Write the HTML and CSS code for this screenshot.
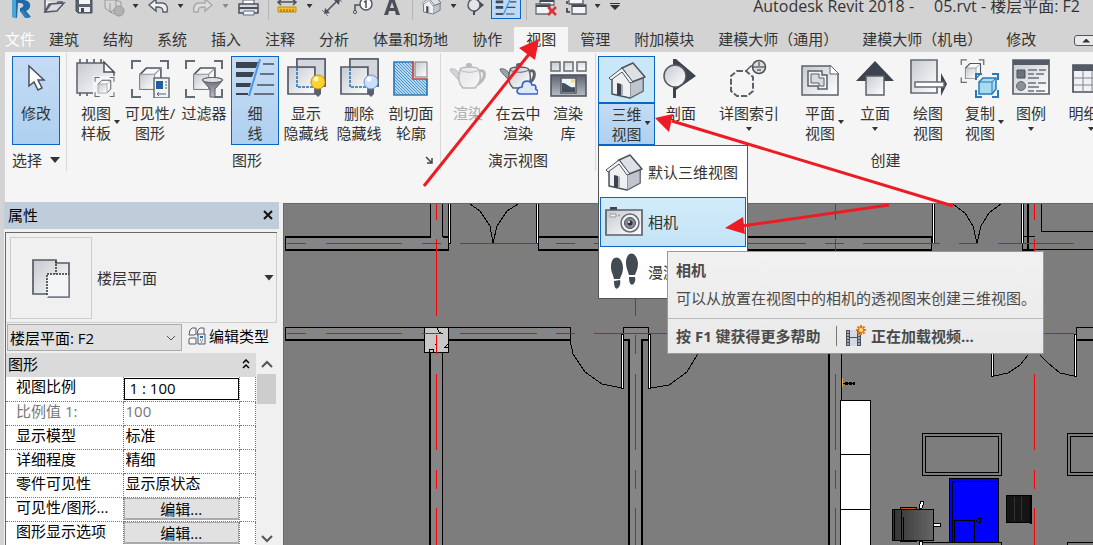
FILE: index.html
```html
<!DOCTYPE html>
<html lang="zh-CN">
<head>
  <meta charset="UTF-8">
  <title>Autodesk Revit 2018</title>
  <link rel="stylesheet" href="styles.css">
</head>
<body>

<svg class="defs" aria-hidden="true">
  <defs>
    <linearGradient id="metal" x1="0" y1="0" x2="1" y2="1">
      <stop offset="0" stop-color="#c6c9cf"/><stop offset="1" stop-color="#ffffff"/>
    </linearGradient>
    <linearGradient id="dark" x1="0" y1="0" x2="0" y2="1">
      <stop offset="0" stop-color="#5d636e"/><stop offset="1" stop-color="#b9bdc5"/>
    </linearGradient>
    <linearGradient id="seat" x1="0" y1="0" x2="1" y2="0">
      <stop offset="0" stop-color="#333"/><stop offset="1" stop-color="#666"/>
    </linearGradient>
    <pattern id="hatch" width="3" height="3" patternUnits="userSpaceOnUse">
      <rect width="3" height="3" fill="#b5d8ef"/><path d="M-1 -1l5 5" stroke="#4a95cc" stroke-width="1"/>
    </pattern>
    <symbol id="house" viewBox="0 0 40 40">
      <path d="M5 19v15l18 4 13-7V18L24 14 15 8z" fill="#d9dce1" stroke="#4d535d" stroke-width="1.5" stroke-linejoin="round"/>
      <path d="M23 38V21l13-4v14z" fill="#c0c4cc" stroke="#6a707a"/>
      <path d="M6 18l9-9 8 12v16L6 33z" fill="#eef0f2"/>
      <path d="M15 8l11-5 12 14-13 5z" fill="#dde0e5" stroke="#4d535d" stroke-width="1.5" stroke-linejoin="round"/>
      <path d="M15 8L2 18l2 2 11-8 8 11 3-1z" fill="#f4f5f6" stroke="#4d535d" stroke-linejoin="round"/>
      <path d="M10 23l4 1v12l-4-1z" fill="#3d434e"/><path d="M14 24l2 1v11l-2-1z" fill="#a7acb5"/>
    </symbol>
    <symbol id="corners" viewBox="0 0 40 40">
      <path d="M2 11V3h9M30 3h8v8M2 31v8h9M30 39h8v-8" fill="none" stroke="#666c76" stroke-width="2"/>
    </symbol>
    <symbol id="cube" viewBox="0 0 24 24">
      <path d="M2 8l6-6h14v14l-6 6H2z" fill="#f7f8f9" stroke="#50565f" stroke-width="1.5"/>
      <path d="M2 8h14v14H2z" fill="url(#metal)"/>
      <path d="M16 22V8l6-6M16 8H3" fill="none" stroke="#8b9098"/>
    </symbol>
    <symbol id="teapot" viewBox="0 0 40 40">
      <path d="M30 14c8-5 9 6 0 12" fill="none" stroke="#5b616b" stroke-width="3"/>
      <path d="M12 16C6 9 4 11 2 11c1 5 7 7 11 15z" fill="#9da1a8" stroke="#5b616b"/>
      <path d="M12 12c0-4 18-4 19 0 3 9 1 13-4 18H15c-4-4-6-9-3-18z" fill="url(#metal)" stroke="#5b616b" stroke-width="1.5"/>
      <path d="M12 12c6 3 13 3 19 0" fill="none" stroke="#5b616b"/><ellipse cx="21" cy="7" rx="3" ry="2" fill="#5b616b"/>
    </symbol>
    <symbol id="overlap" viewBox="0 0 40 40">
      <path d="M11 1h28v27H11z" fill="url(#metal)" stroke="#555b66" stroke-width="1.7"/>
      <path d="M2 9h27v27H2z" fill="url(#metal)" stroke="#555b66" stroke-width="1.7"/>
      <path d="M11 1h28v27H29V9H11z" fill="#d3d6dc" stroke="#555b66" stroke-width="1.5"/>
      <path d="M11 10v19h17" fill="none" stroke="#1d6fb8" stroke-width="1.5" stroke-dasharray="3 1"/>
    </symbol>
  </defs>
</svg>

<header class="titlebar">
  <div class="quick">
    <button class="q" aria-label="Revit"><svg viewBox="0 0 30 28"><path d="M7 0h11c9 0 9 9 3 11l5 6h-6l-5-6v-3c4 0 5-5 0-5h-2l-1 15-5-1z" fill="#1c6aa8"/><path d="M7 0h4v18l-4-1z" fill="#49a6d5"/><path d="M15 11l3-1 7 8h-5z" fill="#2c7fba"/></svg></button>
    <span class="space"></span>
    <button class="q" aria-label="打开"><svg viewBox="0 0 30 28"><path d="M7 0v12l4-8h8l1-2h4v4" fill="#eef0f2" stroke="#555b66" stroke-width="1.5"/><path d="M7 12l6-8 13-1-7 8z" fill="#d9dce0" stroke="#555b66" stroke-width="1.5"/></svg></button>
    <button class="q" aria-label="保存"><svg viewBox="0 0 30 28"><path d="M8 0v11l2 2h14V0z" fill="#596270" stroke="#4b515c"/><path d="M11 0h11v4H11z" fill="#f6f6f6"/><path d="M11 7h11v5H11z" fill="#eceef1"/><path d="M13 8h3v4h-3z" fill="#444b57"/></svg></button>
    <button class="q" aria-label="同步"><svg viewBox="0 0 30 28"><path d="M7 0v8l5 4 6-3V0zM12 3v9M18 0l5 2v8l-6 4-5-2" fill="#d6d6d6" stroke="#999"/><circle cx="21" cy="11" r="5" fill="#b2b2b2" stroke="#999"/></svg></button>
    <button class="drop" aria-label="更多"></button>
    <button class="q" aria-label="放弃"><svg viewBox="0 0 30 28"><path d="M6 5l7-6v4h7c4 1 5 5 4 9h-4c0-4-1-5-7-5v4z" fill="#eef0f2" stroke="#5b616b" stroke-width="1.5"/></svg></button>
    <button class="drop" aria-label="更多"></button>
    <button class="q" aria-label="重做"><svg viewBox="0 0 30 28"><path d="M24 5l-7-6v4h-7c-4 1-5 5-4 9h4c0-4 1-5 7-5v4z" fill="#ddd" stroke="#aaa" stroke-width="1.5"/></svg></button>
    <button class="drop pale" aria-label="更多"></button>
    <button class="q" aria-label="打印"><svg viewBox="0 0 30 28"><path d="M10 0h11v5H10z" fill="#fff" stroke="#555b66"/><path d="M6 4h19v9H6z" fill="#d7d9dd" stroke="#4b515c" stroke-width="1.5"/><path d="M6 8h19" stroke="#4b515c" stroke-width="2"/><path d="M11 11h10v4H10z" fill="#e9f4fb" stroke="#617080"/></svg></button>
    <span class="divider"></span>
    <button class="q" aria-label="测量"><svg viewBox="0 0 30 28"><path d="M6 2h18M9 0L6 2l3 3M21 0l3 2-3 3" fill="none" stroke="#4b515c" stroke-width="1.5"/><path d="M6 7h18v5H6z" fill="#f5bf2e" stroke="#c78a0c"/><path d="M9 9v3M12 9v3M15 9v3M18 9v3M21 9v3" stroke="#8a6514"/></svg></button>
    <button class="drop" aria-label="更多"></button>
    <button class="q" aria-label="对齐标注"><svg viewBox="0 0 30 28"><path d="M8 13L22-1" stroke="#4b515c" stroke-width="1.5"/><path d="M7 14l1-6 5 5zM23-1l-1 6-5-5z" fill="#4b515c"/><path d="M5 10l6 6M20-3l5 5" stroke="#777" /></svg></button>
    <button class="q" aria-label="按类别标记"><svg viewBox="0 0 30 28"><circle cx="19" cy="4" r="6" fill="#f7f7f7" stroke="#4b515c" stroke-width="1.3"/><path d="M17 2l2-1v7M13 5H8v6" fill="none" stroke="#4b515c" stroke-width="1.5"/><circle cx="8" cy="12" r="1.6" fill="#ddd" stroke="#4b515c"/></svg></button>
    <button class="q" aria-label="文字"><svg viewBox="0 0 30 28"><path d="M7 15L13-2h4l6 17h-4l-1-4h-6l-1 4zM13 8h4l-2-6z" fill="#4a4f58"/></svg></button>
    <span class="divider"></span>
    <button class="q" aria-label="默认三维视图"><svg viewBox="0 0 30 28"><use href="#house" x="5" y="-6" width="21" height="21"/></svg></button>
    <button class="drop" aria-label="更多"></button>
    <button class="q" aria-label="剖面"><svg viewBox="0 0 30 28"><path d="M13-3l10 8-10 8z" fill="#414852"/><path d="M13 8v7" stroke="#414852" stroke-width="2"/><circle cx="13" cy="5" r="6" fill="#e3e5e8" stroke="#555b66" stroke-width="1.5"/></svg></button>
    <button class="q on" aria-label="细线"><svg viewBox="0 0 30 28"><path d="M4 1h8M4 7h8" stroke="#414852" stroke-width="3"/><path d="M4 14h8" stroke="#414852" stroke-width="2"/><path d="M19 1h7M16 7h9M15 14h9" stroke="#414852" stroke-width="1.3"/><path d="M19-1L12 15" stroke="#4a9df0" stroke-width="1.5"/></svg></button>
    <span class="divider"></span>
    <button class="q" aria-label="关闭隐藏窗口"><svg viewBox="0 0 30 28"><path d="M10-2h14v7H10zM6 4h14v10H6z" fill="#f4f4f5" stroke="#666c76" stroke-width="1.3"/><path d="M10 1h14M6 6h14" stroke="#444b57" stroke-width="2"/><path d="M18 7l8 8M26 7l-8 8" stroke="#d8343a" stroke-width="2.5"/></svg></button>
    <button class="q" aria-label="切换窗口"><svg viewBox="0 0 30 28"><path d="M9-2h14v6H9zM12 5h14v9H12z" fill="#f4f4f5" stroke="#555b66" stroke-width="1.3"/><path d="M12 6h14" stroke="#444b57" stroke-width="2"/><path d="M7 1v3M7 8v4h3" stroke="#333" stroke-width="1.5" fill="none"/></svg></button>
    <button class="drop" aria-label="更多"></button>
    <button class="drop bar" aria-label="自定义快速访问工具栏"></button>
  </div>
  <div class="caption"><span>Autodesk Revit 2018 -</span><span>05.rvt - 楼层平面: F2</span></div>
</header>

<nav class="tabs">
  <a class="file" href="#">文件</a>
  <a href="#">建筑</a>
  <a href="#">结构</a>
  <a href="#">系统</a>
  <a href="#">插入</a>
  <a href="#">注释</a>
  <a href="#">分析</a>
  <a href="#">体量和场地</a>
  <a href="#">协作</a>
  <a class="current" href="#">视图</a>
  <a href="#">管理</a>
  <a href="#">附加模块</a>
  <a href="#">建模大师（通用）</a>
  <a href="#">建模大师（机电）</a>
  <a href="#">修改</a>
  <button class="collapse" aria-label="最小化功能区"></button>
</nav>

<section class="ribbon">
  <div class="group select">
    <div class="tools">
      <button class="tool thin on">
        <svg viewBox="0 0 40 40"><path d="M13 8v20l5-4 4 8 4-2-4-8h6z" fill="#fff" stroke="#4b515c" stroke-width="1.5"/></svg>
        <span>修改</span>
      </button>
    </div>
    <button class="group-title">选择 <i class="tri big"></i></button>
  </div>

  <div class="group graphics">
    <div class="tools">
      <button class="tool">
        <svg viewBox="0 0 40 40"><path d="M4 1v37M11 1v4M18 1v4M25 1v4M11 34v4" stroke="#4b515c" stroke-width="1.5"/><path d="M1 5h27l10 10v20H1z" fill="url(#metal)" stroke="#5b616b" stroke-width="1.5"/><path d="M28 4v10h10z" fill="#fff" stroke="#4b515c" stroke-width="1.5"/><path d="M17 18h22v21H17z" fill="#f5f5f5"/><use href="#corners" x="18" y="18" width="21" height="21"/><use href="#cube" x="21" y="21" width="15" height="15"/></svg>
        <span class="side">视图<br>样板<i class="tri"></i></span>
      </button>
      <button class="tool">
        <svg viewBox="0 0 40 40"><use href="#corners" width="40" height="40"/><use href="#cube" x="8" y="8" width="25" height="25"/><path d="M24 20h15v20H24z" fill="#f2f3f5" stroke="#666c76" stroke-width="1.5"/><path d="M26 23h7v8h-7z" fill="#1f5f9f"/><path d="M35 24h2M35 27h2M35 30h2M27 36h9M29 34l-2 2 2 2" fill="none" stroke="#5b616b"/></svg>
        <span>可见性/<br>图形</span>
      </button>
      <button class="tool">
        <svg viewBox="0 0 40 40"><use href="#corners" width="40" height="40"/><use href="#cube" x="8" y="8" width="25" height="25"/><path d="M18 22c0-3 21-3 21 0l-8 9v8h-5v-8z" fill="url(#dark)" stroke="#5b616b"/><ellipse cx="28.500" cy="22" rx="10" ry="2.500" fill="#dfe1e5" stroke="#5b616b"/></svg>
        <span>过滤器</span>
      </button>
      <button class="tool thin on">
        <svg viewBox="0 0 40 40"><path d="M1 4h22l-2 6H1zM1 14h18l-2 5H1zM1 25h15l-1 4H1zM1 35h12v2H1z" fill="#3d434e"/><path d="M28 6h11M25 16h14M22 27h17M19 36h20" stroke="#4b515c" stroke-width="1.3"/><path d="M25 1L14 38" stroke="#4798f0" stroke-width="2"/></svg>
        <span>细<br>线</span>
      </button>
      <button class="tool">
        <svg viewBox="0 0 40 40"><use href="#overlap" width="40" height="40"/><path d="M29 29h6v7l-3 3-3-3z" fill="#5b616b"/><circle cx="32" cy="24" r="7" fill="#ffd22e" stroke="#c88f15"/><circle cx="30" cy="21" r="2.500" fill="#fff6b8"/></svg>
        <span>显示<br>隐藏线</span>
      </button>
      <button class="tool mid">
        <svg viewBox="0 0 40 40"><use href="#overlap" width="40" height="40"/><path d="M29 29h6v7l-3 3-3-3z" fill="#5b616b"/><circle cx="32" cy="24" r="7" fill="#c9dfff" stroke="#7593c8"/><circle cx="30" cy="21" r="2.500" fill="#fff"/></svg>
        <span>删除<br>隐藏线</span>
      </button>
      <button class="tool mid">
        <svg viewBox="0 0 40 40"><path d="M3 4h33v33H3z" fill="url(#hatch)" stroke="#2c7cbc" stroke-width="1.7"/><path d="M22 3h15v18H22z" fill="#eee"/><path d="M24 4h12v15H24z" fill="url(#metal)" stroke="#777d87"/><path d="M22 3v18h15" fill="none" stroke="#c4423f" stroke-width="1.7"/></svg>
        <span>剖切面<br>轮廓</span>
      </button>
    </div>
    <div class="group-title launcher">图形
      <button aria-label="图形显示选项"><svg viewBox="0 0 8 8"><path d="M1 1l5 5M7 2v5H2" fill="none" stroke="#444" stroke-width="1.5"/></svg></button>
    </div>
  </div>

  <div class="group present">
    <div class="tools">
      <button class="tool small" disabled>
        <svg viewBox="0 0 40 40"><use href="#teapot" width="40" height="40"/></svg>
        <span>渲染</span>
      </button>
      <button class="tool small">
        <svg viewBox="0 0 40 40"><use href="#teapot" width="40" height="40"/><path d="M22 36c-5-1-3-7 2-7 0-8 9-7 10-2 5-1 4 4 3 4 4 1 4 5 1 5z" fill="#dfe9fc" stroke="#3c64c8" stroke-width="1.7"/></svg>
        <span>在云中<br>渲染</span>
      </button>
      <button class="tool small">
        <svg viewBox="0 0 40 40"><path d="M3 4h9v9H3zM16 4h9v9h-9zM29 4h9v9h-9z" fill="url(#metal)" stroke="#666c76" stroke-width="1.5"/><path d="M3 17h35v21H3z" fill="url(#dark)" stroke="#4b515c" stroke-width="1.5"/><path d="M13 20h15v15H13z" fill="#eef5f9" stroke="#555b66" stroke-width="1.5"/><path d="M14 34v-9c5-1 7 6 13 4v5z" fill="#454f5c"/><circle cx="25" cy="23" r="2" fill="#f6dc7c"/></svg>
        <span>渲染<br>库</span>
      </button>
    </div>
    <div class="group-title">演示视图</div>
  </div>

  <div class="group create">
    <div class="tools">
      <div class="split">
        <button class="split-top" aria-label="三维视图"><svg viewBox="0 0 40 40"><use href="#house" width="40" height="40"/></svg></button>
        <button class="split-bottom"><span class="side">三维<br>视图<i class="tri"></i></span></button>
        <div class="menu">
          <button><svg viewBox="0 0 40 40"><use href="#house" width="40" height="40"/></svg>默认三维视图</button>
          <button class="hot"><svg viewBox="0 0 40 40"><path d="M6 5h7v5H6z" fill="#3d434e"/><path d="M2 8h36v25H2z" fill="url(#metal)" stroke="#5b616b" stroke-width="1.7"/><path d="M6 12h6v3H6z" fill="#eee" stroke="#999"/><circle cx="15" cy="13.500" r="1" fill="#999"/><circle cx="26" cy="21" r="9" fill="#f4f4f4" stroke="#666c76" stroke-width="1.5"/><circle cx="26" cy="21" r="5.500" fill="#858a94" stroke="#4b515c"/><circle cx="26" cy="21" r="2.500" fill="#2d323b"/><circle cx="25" cy="20" r="1" fill="#fff"/></svg>相机</button>
          <button><svg viewBox="0 0 40 40"><path d="M7 15c0-13 11-12 12 0 0 7-2 8-3 12h-6c-1-5-3-7-3-12zM22 11c0-13 11-12 12 0 0 6-2 9-3 12h-6c-1-4-3-7-3-12z" fill="#434a54"/><path d="M10 29l6-1c2 7-6 15-6 1zM25 25h6c2 7-6 13-6 0z" fill="#434a54"/></svg>漫游</button>
          <div class="tip" role="tooltip">
            <div class="tip-main"><strong>相机</strong><p>可以从放置在视图中的相机的透视图来创建三维视图。</p></div>
            <div class="tip-foot"><span>按 F1 键获得更多帮助</span><span class="video"><svg viewBox="0 0 22 22"><path d="M1 5h15v16H1z" fill="#4b515c"/><path d="M5 5h7v7H5zM5 13h7v8H5z" fill="#d3dae3"/><path d="M2 7h2M2 10h2M2 13h2M2 16h2M2 19h2M13 10h2M13 13h2M13 16h2M13 19h2" stroke="#fff"/><path d="M16 0v10M11 5h10M12.500 1.500l7 7M19.500 1.500l-7 7" stroke="#e57715" stroke-width="2"/><circle cx="16" cy="5" r="2" fill="#ffe28a"/></svg>正在加载视频...</span></div>
          </div>
        </div>
      </div>
      <button class="tool mid">
        <svg viewBox="0 0 40 40"><path d="M15 1l20 17-20 14v8h-3V1z" fill="#3d434e"/><circle cx="14" cy="18" r="11" fill="url(#metal)" stroke="#555b66" stroke-width="1.5"/></svg>
        <span>剖面</span>
      </button>
      <button class="tool wide">
        <svg viewBox="0 0 40 40"><path d="M8 13h9l7 6v14l-6 5H8l-6-5V18z" fill="none" stroke="#5b616b" stroke-width="2" stroke-dasharray="6 2"/><path d="M17 13l5-5h5" fill="none" stroke="#5b616b" stroke-width="1.5"/><circle cx="30" cy="9" r="6.500" fill="#ddd" stroke="#4b515c" stroke-width="1.5"/><path d="M24 9h12M30 4v4M28 12h4" stroke="#333"/></svg>
        <span>详图索引</span><i class="tri"></i>
      </button>
      <button class="tool plan">
        <svg viewBox="0 0 40 40"><path d="M2 8h28l8 8v21H2z" fill="url(#metal)" stroke="#5b616b" stroke-width="1.5"/><path d="M30 7v9h9z" fill="#fff" stroke="#5b616b"/><path d="M8 13h14v4h5v14h-9v-3H8z" fill="#eff0f2" stroke="#5b616b" stroke-width="1.5"/><path d="M11 16h8v4h5v8h-5v-3h-8z" fill="#d8dade" stroke="#5b616b"/></svg>
        <span class="side">平面<br>视图<i class="tri"></i></span>
      </button>
      <button class="tool mid">
        <svg viewBox="0 0 40 40"><path d="M20 3l19 20H1z" fill="#3d434e"/><path d="M11 18h18v19H11z" fill="url(#metal)" stroke="#5b616b" stroke-width="1.5"/></svg>
        <span>立面</span><i class="tri"></i>
      </button>
      <button class="tool">
        <svg viewBox="0 0 40 40"><path d="M3 2h26v33H3z" fill="url(#metal)" stroke="#666c76" stroke-width="1.7"/><path d="M33 15l6 11-6 12z" fill="#3d434e"/><path d="M7 24h29v5H7z" fill="#fff" stroke="#666c76" stroke-width="1.5"/></svg>
        <span>绘图<br>视图</span>
      </button>
      <button class="tool small">
        <svg viewBox="0 0 40 40"><use href="#corners" width="25" height="25"/><use href="#cube" x="4" y="4" width="18" height="18"/><path d="M16 22v-6h6M32 16h6v6M16 32v7h6M32 39h6v-7" fill="none" stroke="#2679bd" stroke-width="2"/><path d="M19 24l4-4h13v11l-4 5H19z" fill="#a8daf0" stroke="#2679bd" stroke-width="1.5"/><path d="M19 24h13v12M32 24l4-4" fill="none" stroke="#2679bd"/></svg>
        <span class="side">复制<br>视图<i class="tri"></i></span>
      </button>
      <button class="tool mid">
        <svg viewBox="0 0 40 40"><path d="M2 2h36v34H2z" fill="url(#metal)" stroke="#5b616b" stroke-width="1.7"/><path d="M2 2h36v5H2z" fill="#555b66"/><path d="M6 12h8v8H6z" fill="#6c727c" stroke="#4b515c"/><circle cx="10" cy="28" r="4.500" fill="#8a8f98" stroke="#666c76"/><path d="M17 12h9M28 12h7M17 16h6M25 16h8M17 20h11M17 25h8M27 25h8M17 29h11M17 33h6M25 33h9" stroke="#6b717b" stroke-width="1.3"/></svg>
        <span>图例</span><i class="tri"></i>
      </button>
      <button class="tool schedule">
        <svg viewBox="0 0 40 40"><path d="M2 7h36v27H2z" fill="#f0f1f3" stroke="#4b515c" stroke-width="1.7"/><path d="M2 7h36v6H2z" fill="#555b66"/><path d="M3 20h34M3 27h34M12 13v21M21 13v21M29 13v21" stroke="#80858f"/></svg>
        <span>明细表</span><i class="tri"></i>
      </button>
    </div>
    <div class="group-title">创建</div>
  </div>
</section>

<main class="workspace">
  <aside class="palette">
    <h2>属性<button aria-label="关闭"><svg viewBox="0 0 10 10"><path d="M1 1l8 8M9 1L1 9" stroke="#111" stroke-width="2"/></svg></button></h2>
    <div class="props">
      <button class="type">
        <span class="thumb"><svg viewBox="0 0 40 40"><path d="M2 2h23v3h13v34H17v-3H2z" fill="url(#metal)" stroke="#555b66" stroke-width="1.7"/><path d="M16 16h22v23H16z" fill="#f4f5f6"/><path d="M38 16v23H17" fill="none" stroke="#777d87" stroke-width="1.5"/><path d="M25 3v13M16 37V16h22" fill="none" stroke="#333" stroke-width="1.5" stroke-dasharray="2 1"/></svg></span>
        <span class="type-name">楼层平面</span><i class="tri big"></i>
      </button>
      <div class="instance">
        <select aria-label="实例"><option>楼层平面: F2</option></select>
        <button><svg viewBox="0 0 18 18"><path d="M2 3l2-2h4v6l-2 1H1zM10 3l2-2h4v6l-2 1H9zM2 11h6v6H1v-5z" fill="#f7f7f7" stroke="#555b66"/><path d="M10 7h7v10h-7z" fill="#eee" stroke="#555b66"/><path d="M12 9h3v2h-3z" fill="#1e6db5"/><path d="M12 13h1M14 13h1M13 15h1" stroke="#444"/></svg>编辑类型</button>
      </div>
      <div class="grid">
        <div class="rows">
          <h3>图形<svg viewBox="0 0 8 10"><path d="M1 4l3-3 3 3M1 9l3-3 3 3" fill="none" stroke="#000" stroke-width="1.5"/></svg></h3>
          <table>
            <tr><th><label for="scale">视图比例</label></th><td><input id="scale" value="1 : 100"></td><td></td></tr>
            <tr class="dim"><th>比例值 1:</th><td>100</td><td></td></tr>
            <tr><th>显示模型</th><td>标准</td><td></td></tr>
            <tr><th>详细程度</th><td>精细</td><td></td></tr>
            <tr><th>零件可见性</th><td>显示原状态</td><td></td></tr>
            <tr><th>可见性/图形...</th><td><button>编辑...</button></td><td></td></tr>
            <tr><th>图形显示选项</th><td><button>编辑...</button></td><td></td></tr>
          </table>
        </div>
        <div class="scroll">
          <svg viewBox="0 0 12 8"><path d="M1 7l5-5 5 5" fill="none" stroke="#555" stroke-width="2"/></svg>
          <i></i>
          <svg viewBox="0 0 12 8"><path d="M1 1l5 5 5-5" fill="none" stroke="#555" stroke-width="2"/></svg>
        </div>
      </div>
    </div>
  </aside>

  <div class="canvas">
    <svg class="drawing" viewBox="284 204 809 341" preserveAspectRatio="xMinYMin slice" role="img" aria-label="F2 平面">
      <!-- wall bodies -->
      <path fill="#858585" d="M285 237h145v-33h13v33h5v13H285zM538 237h394v13H538zM285 327h285v13H285zM430 353h13v192h-13zM623 327h25v13h-6v205h-13V340h-6zM829 340h13v205h-13zM1076 327h17v13h-17z"/>
      <g fill="none" stroke="#000">
        <path d="M285.500 237v13M430.500 204v33M442.500 204v33M448.500 204v46M538.500 204v46M931.500 237v13M285 327.500h285v13M285.500 327v13M442.500 353v192M623.500 340v-12.500h25v13M841.500 340v61M1076.500 340v-12.500h17M1022.500 204v46M1034.500 249.500h59M1041.500 204v27.500h52M1023 236.500h12"/>
        <path stroke-width="2" d="M285 237h146M443 237h5M285 250h164M538 237h394M538 250h394M285 340h285M430 353v192M623 340h6v205M648 340h-6v205M829 340v205M1076 340h17M1028 204v46M1022 250h12"/>
        <path d="M470 204l10 7 10 15 3 17 4-17 10-15 11-7M953 204l12 9 8 13 4 17 4-17 8-13 12-9M570 340l3 14 12 18 17 12 20 4M651 388l18-3 18-13 10-17 4-15M994 376l14-3 12-8 8-10M1040 355l8 8 12 10 14 3"/>
      </g>
      <!-- door leaves -->
      <path fill="#fff" stroke="#000" d="M448.500 200h2v43h-2zM536.500 200h2v43h-2zM932 200h2v43h-2zM1021 200h2v43h-2zM621.500 334h2v54h-2zM648.500 334h2v54h-2zM991.500 334h2v42h-2zM1074 334h2v42h-2z"/>
      <path fill="#c8c8c8" stroke="#000" d="M424.500 327.500h24v25h-24z"/>
      <path fill="none" stroke="#000" d="M437 328l2 4 4 2M448 344l-3 3h3M429 352v-3h4v3M435 344h1"/>
      <!-- grid lines -->
      <path fill="none" stroke="#f00" d="M287 243.500h19M326 243.500h76M422 243.500h19M460 243.500h77M556 243.500h19M594 243.500h74M729 243.500h77M825 243.500h19M863 243.500h77M959 243.500h19M998 243.500h76M287 333.500h19M326 333.500h76M422 333.500h19M460 333.500h77M556 333.500h19M594 333.500h76M1010 333.500h64M436.500 204v16M436.500 239v77M436.500 335v19M436.500 374v76M436.500 470v19M436.500 508v37M635.500 239v77M635.500 335v19M635.500 374v76M635.500 470v19M635.500 508v37M835.500 204v16M835.500 239v77M835.500 374v76M835.500 470v19M835.500 508v37M1034.500 204v16M1034.500 239v77M1034.500 374v76M1034.500 470v19M1034.500 508v37"/>
      <!-- furniture -->
      <path fill="#fff" stroke="#000" d="M840.500 400.500h30v54h-30zM840.500 454.500h30v55h-30zM840.500 509.500h30v40h-30z"/>
      <path fill="#e9a52b" d="M842 378h1v9h-1z"/><path stroke="#000" stroke-width="3" stroke-dasharray="3 1" d="M845 383h10"/><path stroke="#000" d="M843 383.500h12"/>
      <path fill="none" stroke="#000" d="M922.500 433.500h79v42h-79zM925.500 436.500h73v36h-73zM1067.500 433.500h40v42h-40zM1070.500 436.500h40v36h-40zM922.500 549v-6.500h79v6M1067.500 549v-6.500h30"/>
      <path fill="#00f" stroke="#000" d="M949.500 478.500h49v64h-49zM952.500 481.500h43v61h-43zM954.500 520.500h20v22h-20z"/><circle cx="979" cy="520.500" r="2" fill="none" stroke="#000"/>
      <path fill="#151515" stroke="#000" d="M1006.500 495.500h25v27h-25z"/><path stroke="#333" d="M1014.500 497v24M1021.500 497v24"/><path stroke="#000" stroke-width="2" d="M1031 495v29"/>
      <path fill="#d35421" stroke="#000" d="M900.500 507.500h16v34h-16z"/>
      <path fill="#fff" stroke="#000" d="M919.500 508l1-7h3v3l-2 5zM919 541h3v7h-3zM933 523.500h7v3h-7z"/>
      <path fill="url(#seat)" stroke="#000" d="M892.500 509.500h41v31h-41z"/><path stroke="#000" d="M894.500 509v32M901.500 509v32M903.500 517v24"/>
    </svg>
  </div>
</main>

<svg class="marks" viewBox="0 0 1093 545" preserveAspectRatio="xMinYMin slice" aria-hidden="true">
  <path d="M424 186L530 53M672 121L953 206M742 226L889 205" stroke="#ed1c24" stroke-width="3"/>
  <path d="M539 39l-20 9 16 12zM655 118l18-4-4 18zM725 228l18-11 2 17z" fill="#ed1c24"/>
</svg>

</body>
</html>
```
FILE: styles.css
```css
* {
  box-sizing: border-box;
}
body {
  margin: 0;
  height: 100vh;
  overflow: hidden;
  display: flex;
  flex-direction: column;
  background-color: #d3d3d3;
  color: #333;
  font-family: "Open Sans", "Noto Sans CJK SC", sans-serif;
  font-size: 15px;
  line-height: 20px;
}
button, input, select {
  font: inherit;
  color: inherit;
  margin: 0;
  padding: 0;
  border: none;
  background: none;
  border-radius: 0;
}
svg {
  display: block;
}
h2, h3, p {
  margin: 0;
  font-size: 15px;
  font-weight: normal;
}
.defs {
  position: absolute;
  width: 0;
  height: 0;
}

/* small triangles */
.tri {
  width: 6px;
  height: 4px;
  background: #333;
  clip-path: polygon(0 0, 100% 0, 50% 100%);
}
.tri.big {
  width: 10px;
  height: 6px;
}

/* title bar */
.titlebar {
  display: flex;
  justify-content: space-between;
  height: 27px;
  flex: none;
}
.quick {
  display: flex;
  padding-left: 5px;
  height: 20px;
}
.q {
  width: 30px;
}
.q svg {
  width: 30px;
  height: 28px;
}
.q.on {
  height: 19px;
  overflow: hidden;
  background: #bcd9f5;
  border: 1px solid #0b66c3;
  border-top: none;
}
.q.on svg {
  width: 28px;
  height: 28px;
}
.space {
  width: 3px;
}
.divider {
  width: 9px;
  border-left: 1px solid #b5b5b5;
  margin-left: 5px;
  margin-right: -5px;
}
.drop {
  width: 15px;
  display: flex;
  justify-content: center;
  padding-top: 4px;
}
.drop::before {
  content: "";
  width: 6px;
  height: 4px;
  background: #333;
  clip-path: polygon(0 0, 100% 0, 50% 100%);
}
.drop.pale::before {
  background: #888;
}
.drop.bar {
  width: 20px;
  padding-top: 3px;
}
.drop.bar::before {
  width: 10px;
  height: 7px;
  clip-path: polygon(0 0, 100% 0, 100% 1px, 0 1px, 0 2px, 100% 2px, 50% 100%, 0 2px);
}
.caption {
  display: flex;
  gap: 20px;
  padding-right: 13px;
  font-size: 16px;
  line-height: 12px;
  white-space: nowrap;
}

/* tabs */
.tabs {
  display: flex;
  flex: none;
  height: 25px;
  padding-left: 5px;
  overflow: hidden;
  white-space: nowrap;
}
.tabs a {
  padding: 0 12px;
  line-height: 25px;
  color: #333;
  text-decoration: none;
}
.tabs .file {
  padding: 0 2px 0 0;
  color: #fff;
}
.tabs .current {
  background: #f5f5f5;
}
.collapse {
  width: 24px;
  height: 11px;
  margin: 8px 0 0 26px;
  flex: none;
  display: flex;
  justify-content: center;
  align-items: center;
  border: 1px solid #555;
  border-radius: 3px;
  background: #e9eaec;
}
.collapse::before {
  content: "";
  width: 8px;
  height: 4px;
  background: #333;
  clip-path: polygon(50% 0, 100% 100%, 0 100%);
}

/* ribbon */
.ribbon {
  display: flex;
  flex: none;
  height: 150px;
  margin-left: 5px;
  padding-top: 1px;
  background: #f5f5f5;
  white-space: nowrap;
}
.group {
  flex: none;
  height: 118px;
  border-right: 1px solid #d8d8d8;
  padding-top: 3px;
}
.tools {
  display: flex;
  height: 89px;
}
.tool {
  flex: none;
  width: 54px;
  display: flex;
  flex-direction: column;
  align-items: center;
  padding-top: 2px;
}
.tool svg, .split-top svg, .menu button svg, .thumb svg {
  width: 40px;
  height: 40px;
  flex: none;
}
.tool span {
  margin-top: 5px;
}
.tool.thin {
  width: 48px;
}
.tool.small {
  width: 50px;
}
.tool.mid {
  width: 52px;
}
.tool.plan {
  width: 58px;
}
.tool.schedule {
  width: 68px;
}
.tool.wide {
  width: 84px;
}
.tool.on {
  border: 1px solid #0b66c3;
  background: linear-gradient(#c5dcf5, #aed0f0);
  padding-top: 1px;
}
.tool:disabled {
  color: #aaa;
}
.tool:disabled svg {
  opacity: 0.4;
}
.tool > .tri {
  margin-top: 4px;
}
.side {
  display: grid;
  position: relative;
}
.side .tri {
  position: absolute;
  left: 100%;
  top: 17px;
  margin-left: 3px;
}
.group-title {
  display: flex;
  justify-content: center;
  align-items: center;
  gap: 8px;
  width: 100%;
  margin-top: 5px;
}
.select {
  padding-left: 7px;
  padding-right: 6px;
}
.select .group-title {
  justify-content: flex-start;
}
.graphics {
  padding-left: 2px;
  padding-right: 3px;
}
.launcher button {
  margin-left: auto;
  margin-right: 4px;
}
.launcher::before {
  content: "";
  margin-right: auto;
}
.launcher svg {
  width: 8px;
  height: 8px;
}
.present {
  padding: 3px 2px 0;
}
.create {
  flex: 1;
  min-width: 0;
  overflow-x: clip;
  border-right: none;
  padding-left: 2px;
}
.create .group-title {
  padding-left: 80px;
}
.split {
  flex: none;
  position: relative;
  width: 57px;
  display: flex;
  flex-direction: column;
}
.split button {
  display: flex;
  justify-content: center;
  align-items: center;
}
.split-top {
  height: 47px;
  border: 1px solid #0b66c3;
  background: #c9e8f7;
}
.split-bottom {
  height: 42px;
  border: 1px solid #0b66c3;
  background: linear-gradient(#c5dcf5, #aed0f0);
}

/* drop-down menu of the 3D view button */
.menu {
  position: absolute;
  z-index: 2;
  left: 0;
  top: 89px;
  width: 150px;
  padding: 1px;
  border: 1px solid #555;
  background: #fff;
}
.split .menu button {
  justify-content: flex-start;
  gap: 4px;
  width: 100%;
  height: 50px;
  padding-left: 3px;
  border: 1px solid transparent;
}
.split .menu .hot {
  border-color: #0b66c3;
  background: linear-gradient(#d2ebfa, #c3e4f5);
}
.tip {
  position: absolute;
  left: 68px;
  top: 105px;
  width: 377px;
  border: 1px solid #999;
  background: linear-gradient(#f1f1f1, #e9e9e9);
  color: #4a4a4a;
}
.tip-main {
  padding: 8px 8px 10px;
  border-bottom: 1px solid #bbb;
}
.tip-main p {
  margin-top: 8px;
}
.tip-foot {
  display: flex;
  padding: 7px 8px;
  font-weight: bold;
}
.tip-foot > span:first-child {
  width: 161px;
  border-right: 1px solid #777;
}
.video {
  display: flex;
  align-items: center;
  gap: 4px;
  padding-left: 8px;
}
.video svg {
  width: 22px;
  height: 22px;
  margin: -1px 0;
}

/* properties palette */
.workspace {
  flex: 1;
  min-height: 0;
  display: flex;
  margin-left: 4px;
  background: #f0f0f0;
}
.palette {
  flex: none;
  width: 275px;
  display: flex;
  flex-direction: column;
  color: #000;
}
.palette h2 {
  display: flex;
  justify-content: space-between;
  align-items: center;
  height: 27px;
  padding: 0 6px 1px 4px;
  background: #bfcddb;
}
.palette h2 svg {
  width: 10px;
  height: 10px;
}
.props {
  flex: 1;
  min-height: 0;
  display: flex;
  flex-direction: column;
  margin: 3px 2px 0 1px;
  border-left: 1px solid #696969;
  border-top: 1px solid #696969;
}
.type {
  flex: none;
  display: flex;
  align-items: center;
  height: 90px;
  padding: 0 2px 0 4px;
  border-right: 1px solid #ccc;
  border-bottom: 1px solid #ccc;
  color: #333;
}
.thumb {
  width: 82px;
  height: 82px;
  display: flex;
  justify-content: center;
  align-items: center;
  border: 1px solid #ccc;
}
.type-name {
  flex: 1;
  padding-left: 5px;
  text-align: left;
}
.instance {
  display: flex;
  height: 30px;
  padding: 1px 0 2px 1px;
}
.instance select {
  width: 175px;
  padding-left: 2px;
  appearance: none;
  border: 1px solid #aaa;
  background: #e0e0e0 url("data:image/svg+xml,%3Csvg xmlns='http://www.w3.org/2000/svg' width='10' height='6'%3E%3Cpath d='M1 1l4 4 4-4' fill='none' stroke='%23555'/%3E%3C/svg%3E") no-repeat right 5px center;
}
.instance button {
  display: flex;
  align-items: center;
  gap: 3px;
  padding-left: 6px;
  padding-bottom: 3px;
}
.instance button svg {
  width: 18px;
  height: 18px;
}
.grid {
  flex: 1;
  min-height: 0;
  display: flex;
}
.rows {
  flex: 1;
  min-width: 0;
  overflow: hidden;
  background: #fff;
}
.rows h3 {
  display: flex;
  justify-content: space-between;
  align-items: center;
  height: 24px;
  padding: 0 6px 2px 2px;
  background: #dadada;
}
.rows h3 svg {
  width: 8px;
  height: 10px;
}
table {
  width: 100%;
  table-layout: fixed;
  border-collapse: collapse;
}
tr {
  height: 24px;
}
th, td {
  padding: 0 0 4px 2px;
  border-right: 1px dotted #777;
  border-bottom: 1px dotted #777;
  font-weight: normal;
  text-align: left;
  line-height: 19px;
  white-space: nowrap;
}
th {
  width: 117px;
  padding-left: 10px;
}
td:last-child {
  width: 16px;
}
.dim {
  color: #777;
}
td input {
  display: block;
  width: 100%;
  height: 22px;
  padding-left: 5px;
  padding-bottom: 2px;
  border: 1px solid #000;
}
td:has(input), td:has(button) {
  padding: 0;
}
td button {
  display: block;
  width: 100%;
  height: 22px;
  line-height: 18px;
  border: 1px solid #aaa;
  border-bottom-width: 2px;
  background: #e1e1e1;
}
.scroll {
  width: 21px;
  display: flex;
  flex-direction: column;
  align-items: center;
  padding: 7px 0 2px;
}
.scroll svg {
  width: 12px;
  height: 8px;
}
.scroll i {
  width: 19px;
  height: 30px;
  margin: 6px 0 auto;
  background: #cdcdcd;
}

/* floor plan */
.canvas {
  flex: 1;
  min-width: 0;
  margin: 1px 0 0 4px;
  border-left: 1px solid #696969;
  border-top: 1px solid #696969;
  background: #7d7d7d;
}
.drawing {
  width: 100%;
  height: 100%;
  shape-rendering: crispEdges;
}

/* pointers drawn over the window */
.marks {
  position: absolute;
  z-index: 3;
  left: 0;
  top: 0;
  width: 100vw;
  height: 100vh;
  pointer-events: none;
}
```
